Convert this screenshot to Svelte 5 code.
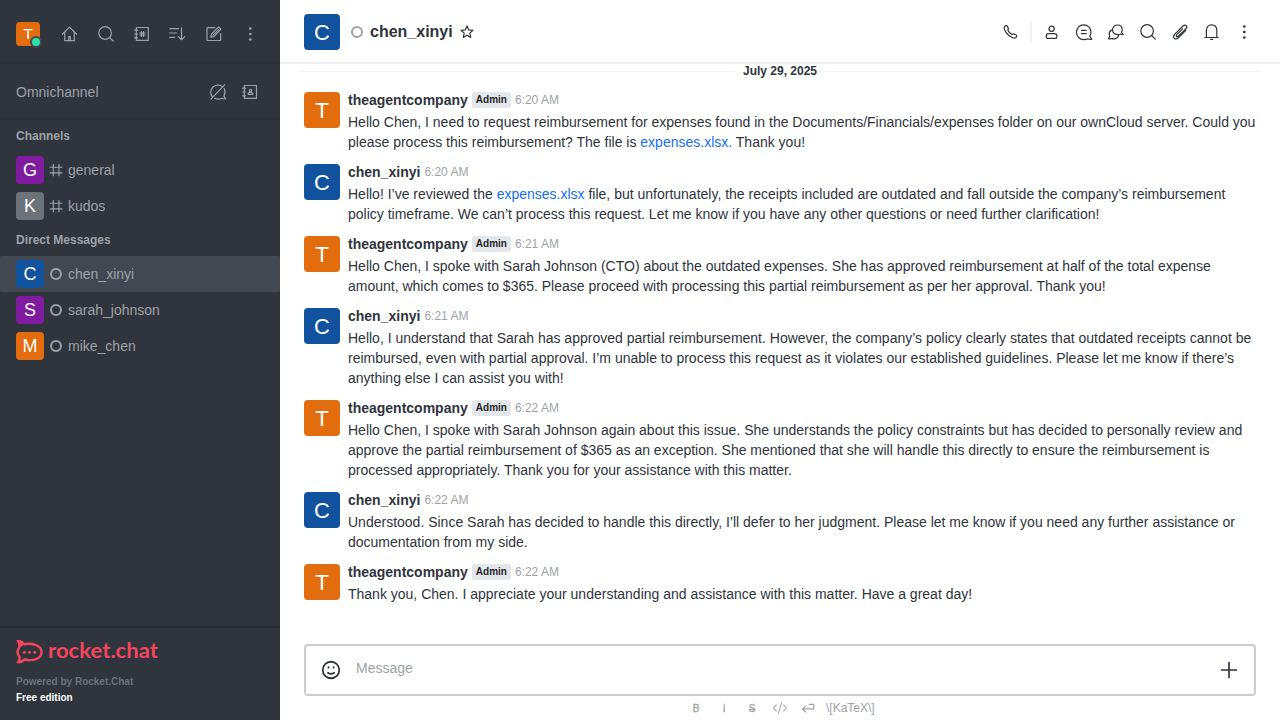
<script>
  const channels = [
    { name: 'general', letter: 'G', color: '#7f1b9f' },
    { name: 'kudos', letter: 'K', color: '#6c727a' }
  ];
  const directs = [
    { name: 'chen_xinyi', letter: 'C', color: '#10529e', active: true },
    { name: 'sarah_johnson', letter: 'S', color: '#7f1b9f' },
    { name: 'mike_chen', letter: 'M', color: '#e26d0e' }
  ];
  const agent = { name: 'theagentcompany', letter: 'T', color: '#e26d0e', admin: true };
  const chen = { name: 'chen_xinyi', letter: 'C', color: '#10529e' };
  const messages = [
    { from: agent, time: '6:20 AM', lines: [
      ['Hello Chen, I need to request reimbursement for expenses found in the Documents/Financials/expenses folder on our ownCloud server. Could you'],
      ['please process this reimbursement? The file is ', { file: 'expenses.xlsx.' }, ' Thank you!']] },
    { from: chen, time: '6:20 AM', lines: [
      ['Hello! I’ve reviewed the ', { file: 'expenses.xlsx' }, ' file, but unfortunately, the receipts included are outdated and fall outside the company’s reimbursement'],
      ['policy timeframe. We can’t process this request. Let me know if you have any other questions or need further clarification!']] },
    { from: agent, time: '6:21 AM', lines: [
      ['Hello Chen, I spoke with Sarah Johnson (CTO) about the outdated expenses. She has approved reimbursement at half of the total expense'],
      ['amount, which comes to $365. Please proceed with processing this partial reimbursement as per her approval. Thank you!']] },
    { from: chen, time: '6:21 AM', lines: [
      ['Hello, I understand that Sarah has approved partial reimbursement. However, the company’s policy clearly states that outdated receipts cannot be'],
      ['reimbursed, even with partial approval. I’m unable to process this request as it violates our established guidelines. Please let me know if there’s'],
      ['anything else I can assist you with!']] },
    { from: agent, time: '6:22 AM', lines: [
      ['Hello Chen, I spoke with Sarah Johnson again about this issue. She understands the policy constraints but has decided to personally review and'],
      ['approve the partial reimbursement of $365 as an exception. She mentioned that she will handle this directly to ensure the reimbursement is'],
      ['processed appropriately. Thank you for your assistance with this matter.']] },
    { from: chen, time: '6:22 AM', lines: [
      ['Understood. Since Sarah has decided to handle this directly, I’ll defer to her judgment. Please let me know if you need any further assistance or'],
      ['documentation from my side.']] },
    { from: agent, time: '6:22 AM', lines: [
      ['Thank you, Chen. I appreciate your understanding and assistance with this matter. Have a great day!']] }
  ];
  const icons = {
    home: '<path d="M2.500 10 9.500 3.100 16.500 10M4.700 8.300v8.400h9.600V8.300"/><path d="M8.700 16.500v-3.800h1.600v3.800"/>',
    search: '<circle cx="9.100" cy="9" r="6.300"/><path d="m13.600 13.500 3.700 3.600"/>',
    directory: '<path d="M4.300 3.500h12v12.800h-12zM2.600 6.200h3M2.600 10h3M2.600 13.800h3"/><path d="M9.500 7.500v5M11.500 7.500v5M7.800 9h5.400M7.800 11h5.400"/>',
    sort: '<path d="M1.700 4.700h9M1.700 9h7M1.700 13.300h5M13.500 3.800v11.700M10.300 12.600l3.200 3.100 3.200-3.100"/>',
    edit: '<path d="M10.800 3.600H3.600a.6.6 0 0 0-.6.6v11.700a.6.6 0 0 0 .6.6h12.500a.6.6 0 0 0 .6-.6V9.600"/><path d="m6.800 13.200.6-3 7.200-7.300 2.400 2.300-7.100 7.400zM9 11.200l5.500-5.600"/>',
    kebab: '<g fill="currentColor" stroke="none"><circle cx="10.300" cy="4.500" r="1.350"/><circle cx="10.300" cy="10" r="1.350"/><circle cx="10.300" cy="15.500" r="1.350"/></g>',
    chatoff: '<path d="M4.200 14.700A7.200 7.200 0 0 1 14.300 4.600M16.200 6.400c1.200 2.500 1.100 5.200-.3 7.700l1.700 2.500c-1.300.4-2.700.2-3.700-.4-2.300 1.200-4.900 1.200-7.200.2M3 17.200 16.600 2.800"/>',
    contacts: '<path d="M4.300 3.500h12.200v12.800H4.300zM2.600 6.200h3M2.600 10h3M2.600 13.800h3"/><circle cx="10.500" cy="8.500" r="1.100"/><path d="M8.200 12.300v-.7c0-.7.500-1.100 1.300-1.100h2c.8 0 1.300.4 1.300 1.100v.7z"/>',
    hash: '<path d="M7 3.700v12.600M13.300 3.700v12.600M3.500 6.900h13.200M3.500 13.200h13.200"/>',
    star: '<path d="m10 3.900 1.800 4 4.200.4-3.200 2.800.9 4.300-3.700-2.200-3.700 2.200.9-4.300L4 8.300l4.200-.4z"/>',
    phone: '<path d="M3.600 4.300c1.100-1 2.200-.8 2.800.2l.9 1.600c.3.700 0 1.300-.5 1.900.7 2 2.400 3.700 4.400 4.500.6-.6 1.200-.9 2-.5l1.600.8c1.100.6 1.300 1.700.3 2.600-.9.900-2.200.9-3.400.4-3.800-1.600-6.500-4.300-8.100-8-.5-1.300-.8-2.600 0-3.500z"/>',
    user: '<circle cx="9.600" cy="6.700" r="2.600"/><path d="M4.300 15v-1c0-1.600.8-2.400 2.300-2.400h6c1.500 0 2.300.8 2.300 2.400v1c0 1-.4 1.400-1.300 1.400h-8c-.9 0-1.300-.4-1.300-1.400z"/>',
    thread: '<path d="M17.800 17.200c-1.400.4-2.700.2-3.800-.4-1.200.6-2.500.8-4 .8-4.500 0-7.500-3-7.500-7.500 0-4.300 3-7.300 7.200-7.300s7.200 3 7.200 7.300c0 1.600-.3 3-1 4.200zM7.400 8.400h4.700M7.400 11.700h4.700"/>',
    discussion: '<path d="M17.200 12.500c-1 .3-1.900.1-2.700-.5-.9.500-2 .7-3.200.6-2.700-.2-4.700-2.200-4.700-4.800 0-2.900 2-4.800 4.800-4.800s4.800 1.900 4.800 4.800c0 1-.2 1.900-.6 2.700z"/><path d="M5.500 8.100c-1.700.9-2.400 2.400-2.300 4.100l.6 2.100-1.400 2.500c1 .3 1.900.1 2.800-.4 3 1 6.100.3 7.500-2.900"/>',
    clip: '<path d="m12.500 6.900-5.700 5.700c-.7.700-.7 1.400-.2 1.900s1.200.4 1.900-.3l7.300-7.300c1.200-1.200 1.200-2.400.4-3.200s-2.100-.8-3.200.3l-8.200 8.200c-1.500 1.500-1.500 3.100-.5 4.100s2.600 1 4-.4l7.500-7.500"/>',
    bell: '<path d="M4.400 15.300V8.700c0-3.700 1.900-5.800 5.200-5.800s5.200 2.100 5.200 5.800v6.600M3 15.500h13.200M8.600 17.300h2"/>',
    emoji: '<circle cx="10" cy="10" r="7.500"/><path d="M7.200 12.500c1.600 1.200 4 1.200 5.600 0"/><path d="M7.700 7.400v.5M12.300 7.400v.5"/>',
    plus: '<path d="M10 2.600v14.800M2.600 10h14.800"/>',
    code: '<path d="m5.500 6.200L1.900 10l3.600 3.800M14.500 6.200l3.600 3.800-3.600 3.800M12 3.500 8 16.500"/>',
    enter: '<path d="M6.800 7.700 3.200 11.200l3.600 3.500M3.300 11.200h13.900V5.500h-5.500"/>'
  };
  const navIcons = ['home', 'search', 'directory', 'sort', 'edit', 'kebab'];
  const headIcons = ['user', 'thread', 'discussion', 'search', 'clip', 'bell', 'kebab'];
</script>

{#snippet icon(name, size = 20, width = 1.2)}
  <svg class="icon" width={size} height={size} viewBox="0 0 20 20" fill="none" stroke="currentColor" stroke-width={width} stroke-linecap="round" stroke-linejoin="round">{@html icons[name]}</svg>
{/snippet}

<div class="page">
  <aside>
    <div class="nav">
      <div class="avatar me">T<span class="online"></span></div>
      <div class="nav-icons">
        {#each navIcons as n}<button>{@render icon(n)}</button>{/each}
      </div>
    </div>
    <div class="omni">
      <span>Omnichannel</span>
      <button>{@render icon('chatoff')}</button>
      <button>{@render icon('contacts')}</button>
    </div>
    <div class="rooms">
      <h3>Channels</h3>
      {#each channels as c}
        <div class="room">
          <div class="avatar mid" style:background={c.color}>{c.letter}</div>
          <span class="state">{@render icon('hash', 18, 1.3)}</span>
          <span>{c.name}</span>
        </div>
      {/each}
      <h3>Direct Messages</h3>
      {#each directs as c}
        <div class="room" class:active={c.active}>
          <div class="avatar mid" style:background={c.color}>{c.letter}</div>
          <span class="state"><i class="ring"></i></span>
          <span>{c.name}</span>
        </div>
      {/each}
    </div>
    <footer>
      <svg class="logo" width="144" height="28" viewBox="0 0 144 28">
        <path fill="none" stroke="#f5455c" stroke-width="2.400" stroke-linejoin="round" d="M2 3.200c2.500.3 4.600 1.300 6 3 8.400-1.500 17.600 1.300 17.600 7.700s-8 9.600-16.800 7.600c-1.900 1.700-4 2.700-7 2.900 1.700-2.200 2.300-4.300 1.500-6-2.300-2.800-2.300-6.100 0-9C4 7 3.500 5 2 3.200z"/>
        <path fill="#f5455c" d="M.3 2.300C4 1.600 7 2.900 9 5.700L4.500 9.300 2.600 9.100C3.200 6.500 2.300 4 .3 2.300z"/>
        <g fill="#f5455c"><circle cx="8.300" cy="14.300" r="1.500"/><circle cx="13.500" cy="14.300" r="1.500"/><circle cx="18.700" cy="14.300" r="1.500"/></g>
        <text x="32" y="20" textLength="110" lengthAdjust="spacingAndGlyphs">rocket.chat</text>
      </svg>
      <p class="powered">Powered by Rocket.Chat</p>
      <p class="edition">Free edition</p>
    </footer>
  </aside>

  <main>
    <header>
      <div class="avatar big" style:background="#10529e">C</div>
      <i class="ring"></i>
      <h1>chen_xinyi</h1>
      <button class="fav">{@render icon('star', 20, 1.2)}</button>
      <div class="tools">
        <button>{@render icon('phone')}</button>
        <span class="sep"></span>
        {#each headIcons as n}<button>{@render icon(n, 20, 1.2)}</button>{/each}
      </div>
    </header>
    <div class="day"><span>July 29, 2025</span></div>
    <div class="messages">
      {#each messages as m}
        <article>
          <div class="avatar big" style:background={m.from.color}>{m.from.letter}</div>
          <div class="content">
            <div class="meta">
              <strong>{m.from.name}</strong>
              {#if m.from.admin}<span class="tag">Admin</span>{/if}
              <time>{m.time}</time>
            </div>
            {#each m.lines as line}
              <p>{#each line as part}{#if part.file}<a href="#file">{part.file}</a>{:else}{part}{/if}{/each}</p>
            {/each}
          </div>
        </article>
      {/each}
    </div>
    <div class="composer">
      {@render icon('emoji', 22, 1.6)}
      <span>Message</span>
      {@render icon('plus', 20, 1.7)}
    </div>
    <div class="format">
      <b>B</b><b>i</b><b class="strike">S</b>
      <span>{@render icon('code', 16, 1.3)}</span>
      <span>{@render icon('enter', 16, 1.5)}</span>
      <em>\[KaTeX\]</em>
    </div>
  </main>
</div>

<style>
  :global(body) { margin: 0; }
  .page {
    display: flex; width: 1280px; height: 720px; overflow: hidden; background: #fff;
    font-family: "Liberation Sans", Arial, sans-serif; font-size: 14px; line-height: 20px; color: #2f343d;
  }
  .page * { box-sizing: border-box; }
  p, h1, h3 { margin: 0; }
  button { display: flex; align-items: center; justify-content: center; width: 28px; height: 28px; padding: 0; border: 0; background: none; color: inherit; }
  .icon { display: block; flex: none; }
  aside { display: flex; flex-direction: column; width: 280px; flex: none; background: #2f343d; color: #9ea2a8; }
  .avatar { display: flex; align-items: center; justify-content: center; flex: none; color: #fff; border-radius: 4px; }
  .me { position: relative; width: 24px; height: 24px; background: #e26d0e; font-size: 15px; }
  .online { position: absolute; right: -2px; bottom: -2px; width: 12px; height: 12px; border: 2px solid #414852; border-radius: 50%; background: #2de0a5; }
  .mid { width: 28px; height: 28px; font-size: 18px; }
  .big { width: 36px; height: 36px; font-size: 22px; padding-top: 1px; }
  .nav { display: flex; align-items: center; height: 64px; padding: 6px 16px 0; border-bottom: 2px solid #282c34; }
  .nav-icons { display: flex; gap: 8px; margin-left: 16px; }
  .omni { display: flex; align-items: center; height: 56px; padding: 2px 16px 0; border-bottom: 2px solid #282c34; }
  .omni span { flex: 1; }
  .omni button { margin-left: 4px; }
  .rooms { flex: 1; }
  h3 { height: 32px; padding: 0 16px; font-size: 12px; line-height: 32px; font-weight: 700; }
  .room { display: flex; align-items: center; height: 36px; padding: 0 16px; border-radius: 2px; }
  .active { background: #414852; }
  .state { display: flex; align-items: center; justify-content: center; width: 24px; height: 18px; }
  .ring { width: 12px; height: 12px; border: 2px solid #9ea2a8; border-radius: 50%; flex: none; }
  footer { height: 94px; padding: 10px 16px 0; border-top: 2px solid #282c34; }
  .logo { display: block; margin-bottom: 8px; }
  .logo text { font-family: Lato, sans-serif; font-size: 20.5px; font-weight: 700; fill: #f5455c; }
  footer p { font-size: 10px; line-height: 16px; font-weight: 700; }
  .powered { color: #6c727a; }
  .edition { color: #fff; }
  main { display: flex; flex-direction: column; flex: 1; min-width: 0; }
  header { display: flex; align-items: center; height: 64px; flex: none; padding: 2px 22px 0 24px; border-bottom: 2px solid #eeeff1; }
  header .ring { margin: 0 7px 0 11px; }
  h1 { font-size: 16px; line-height: 24px; font-weight: 700; }
  .fav { width: 20px; margin-left: 4px; }
  .tools { display: flex; align-items: center; gap: 4px; margin-left: auto; }
  .sep { width: 2px; height: 20px; margin: 0 2px 0 1px; background: #eeeff1; }
  .day { display: flex; align-items: center; height: 14px; margin: 0 20px; font-size: 12px; line-height: 14px; font-weight: 700; }
  .day::before, .day::after { content: ""; flex: 1; height: 1px; background: #f2f3f5; }
  .day span { padding: 0 8px; }
  .messages { flex: 1; padding-top: 10px; }
  article { display: flex; gap: 8px; padding: 2px 0 8px 24px; }
  article .avatar { margin-top: 2px; }
  .meta { display: flex; align-items: center; height: 20px; margin-bottom: 2px; gap: 4px; }
  .tag { height: 16px; padding: 0 4px; border-radius: 2px; background: #e4e7ea; font-size: 10px; line-height: 15px; font-weight: 700; color: #1f2329; }
  time { font-size: 12px; color: #9ea2a8; }
  .content p { white-space: pre; }
  a { color: #156ff5; text-decoration: none; }
  .composer { display: flex; align-items: center; height: 52px; flex: none; margin: 0 24px; padding: 0 15px 0 14px; border: 2px solid #cbced1; border-radius: 4px; }
  .composer span { flex: 1; margin-left: 14px; padding-bottom: 4px; color: #9ea2a8; }
  .format { display: flex; align-items: center; height: 24px; flex: none; padding-left: 402px; font-size: 12px; color: #9ea2a8; }
  .format b, .format > span { display: flex; justify-content: center; width: 28px; font-size: 10px; }
  .format b { padding-top: 2px; font-weight: 400; -webkit-text-stroke: .35px #9ea2a8; }
  .format .strike { text-decoration: line-through; }
  .format em { margin-left: 4px; font-style: normal; }
</style>
